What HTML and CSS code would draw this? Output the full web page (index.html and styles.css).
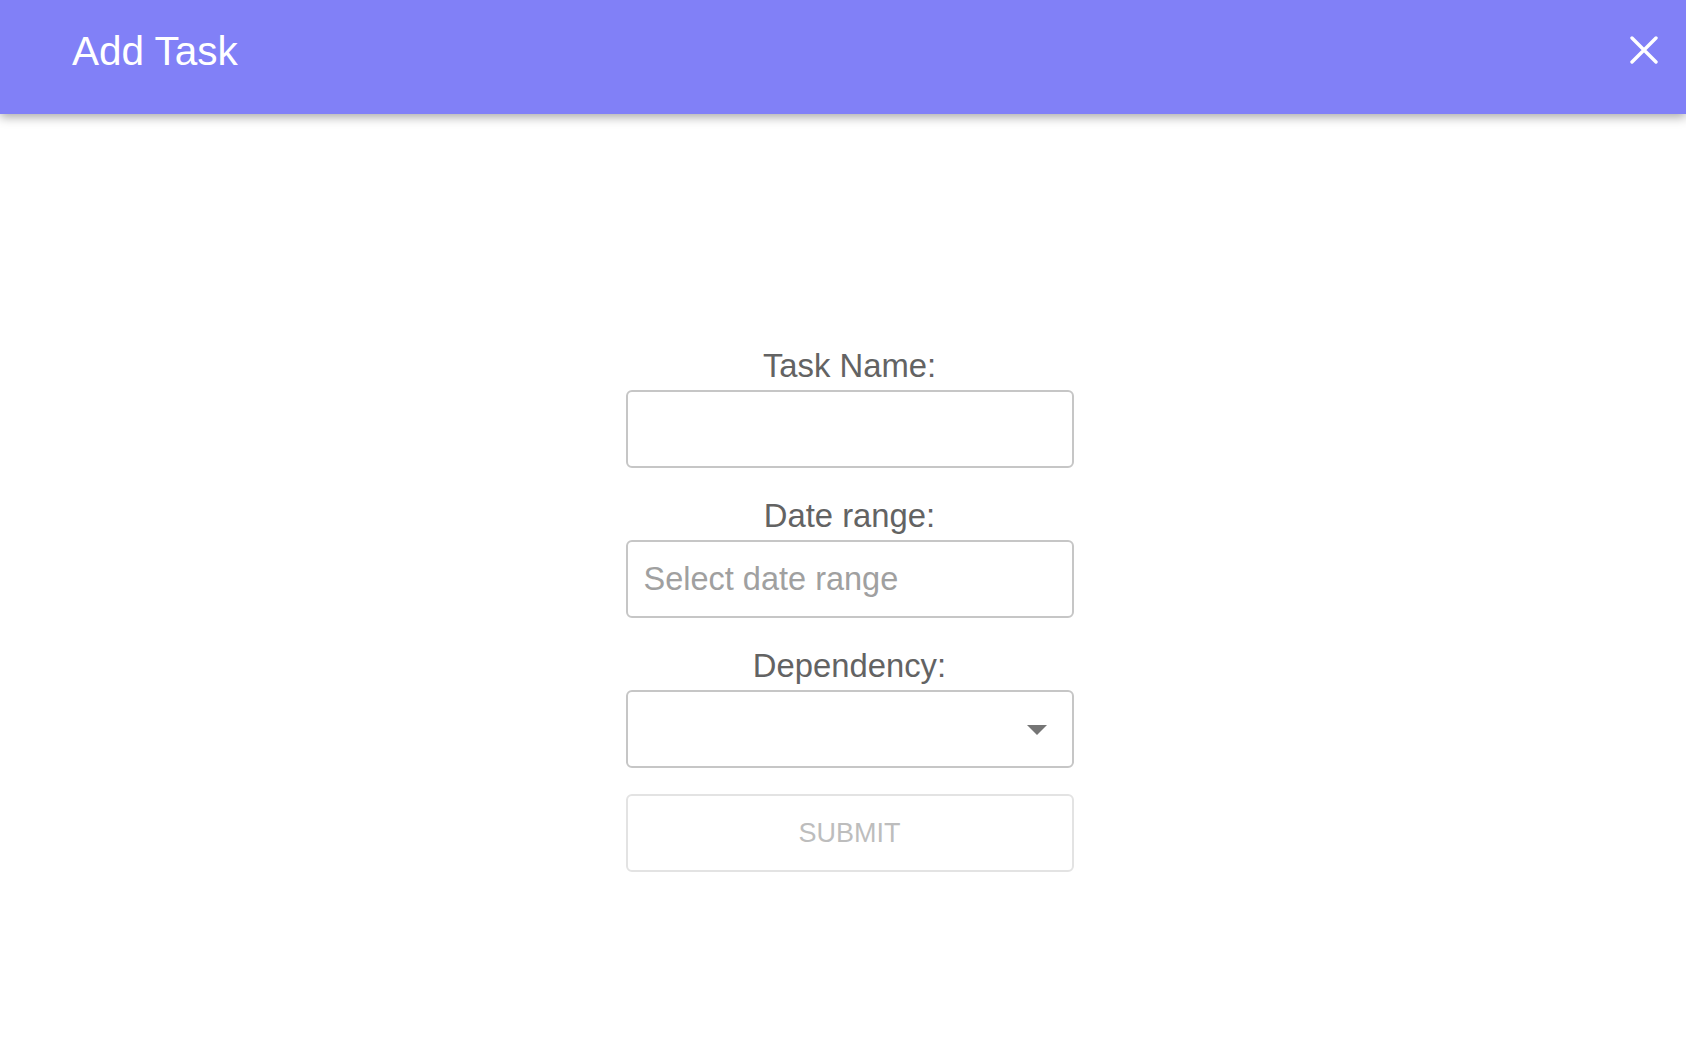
FILE: index.html
```html
<!DOCTYPE html>
<html>
<head>
<meta charset="utf-8">
<title>Add Task</title>
<link rel="stylesheet" href="styles.css">
</head>
<body>
<header class="topbar">
  <h1 class="title">Add Task</h1>
  <button class="close" aria-label="Close">
    <svg width="28" height="28" viewBox="0 0 28 28"><path d="M2 2 L26 26 M26 2 L2 26" stroke="#fff" stroke-width="3.4" stroke-linecap="round" fill="none"/></svg>
  </button>
</header>
<main class="content">
  <form class="task-form">
    <div class="field">
      <label class="label">Task Name:</label>
      <input class="box" type="text">
    </div>
    <div class="field">
      <label class="label">Date range:</label>
      <input class="box" type="text" placeholder="Select date range">
    </div>
    <div class="field">
      <label class="label">Dependency:</label>
      <div class="box select">
        <svg class="caret" width="20" height="10" viewBox="0 0 20 10"><path d="M0 0 L20 0 L10 10 Z" fill="#757575"/></svg>
      </div>
    </div>
    <button class="submit" type="button" disabled>SUBMIT</button>
  </form>
</main>
</body>
</html>
```

FILE: styles.css
```css
html, body {
  margin: 0;
  padding: 0;
  background: #ffffff;
  font-family: "Liberation Sans", Arial, sans-serif;
}

.topbar {
  height: 114px;
  background: #8180f7;
  box-shadow: 0 3px 10px rgba(0, 0, 0, 0.35);
  display: flex;
  justify-content: space-between;
  align-items: flex-start;
  box-sizing: border-box;
  padding: 0 28px 0 72px;
  position: relative;
}

.title {
  margin: 0;
  padding-top: 28px;
  font-size: 40.5px;
  font-weight: normal;
  color: #ffffff;
  line-height: normal;
}

.close {
  margin-top: 36px;
  padding: 0;
  border: none;
  background: transparent;
  width: 28px;
  height: 28px;
  display: block;
}

.close svg {
  display: block;
}

.content {
  display: flex;
  justify-content: center;
  padding: 234px 0 0 13px;
}

.task-form {
  width: 448px;
  display: flex;
  flex-direction: column;
}

.field {
  display: flex;
  flex-direction: column;
  margin-bottom: 30px;
}

.field:nth-child(3) {
  margin-bottom: 26px;
}

.label {
  display: block;
  text-align: center;
  font-size: 32.8px;
  line-height: 36px;
  color: #636363;
  margin-bottom: 6px;
}

.box {
  box-sizing: border-box;
  width: 448px;
  height: 78px;
  border: 2px solid #c6c6c6;
  border-radius: 6px;
  background: #fff;
  padding: 0 16px;
  font-family: "Liberation Sans", Arial, sans-serif;
  font-size: 32.5px;
  color: #616161;
  outline: none;
  margin: 0;
}

.box::placeholder {
  color: #a0a0a0;
}

.select {
  display: flex;
  align-items: center;
  justify-content: flex-end;
  padding-right: 25px;
}

.caret {
  display: block;
  margin-top: 1px;
}

.submit {
  box-sizing: border-box;
  width: 448px;
  height: 78px;
  border: 2px solid #e3e3e3;
  border-radius: 6px;
  background: #fff;
  color: #bdbdbd;
  font-family: "Liberation Sans", Arial, sans-serif;
  font-size: 27px;
  padding: 0;
  margin: 0;
}
```
